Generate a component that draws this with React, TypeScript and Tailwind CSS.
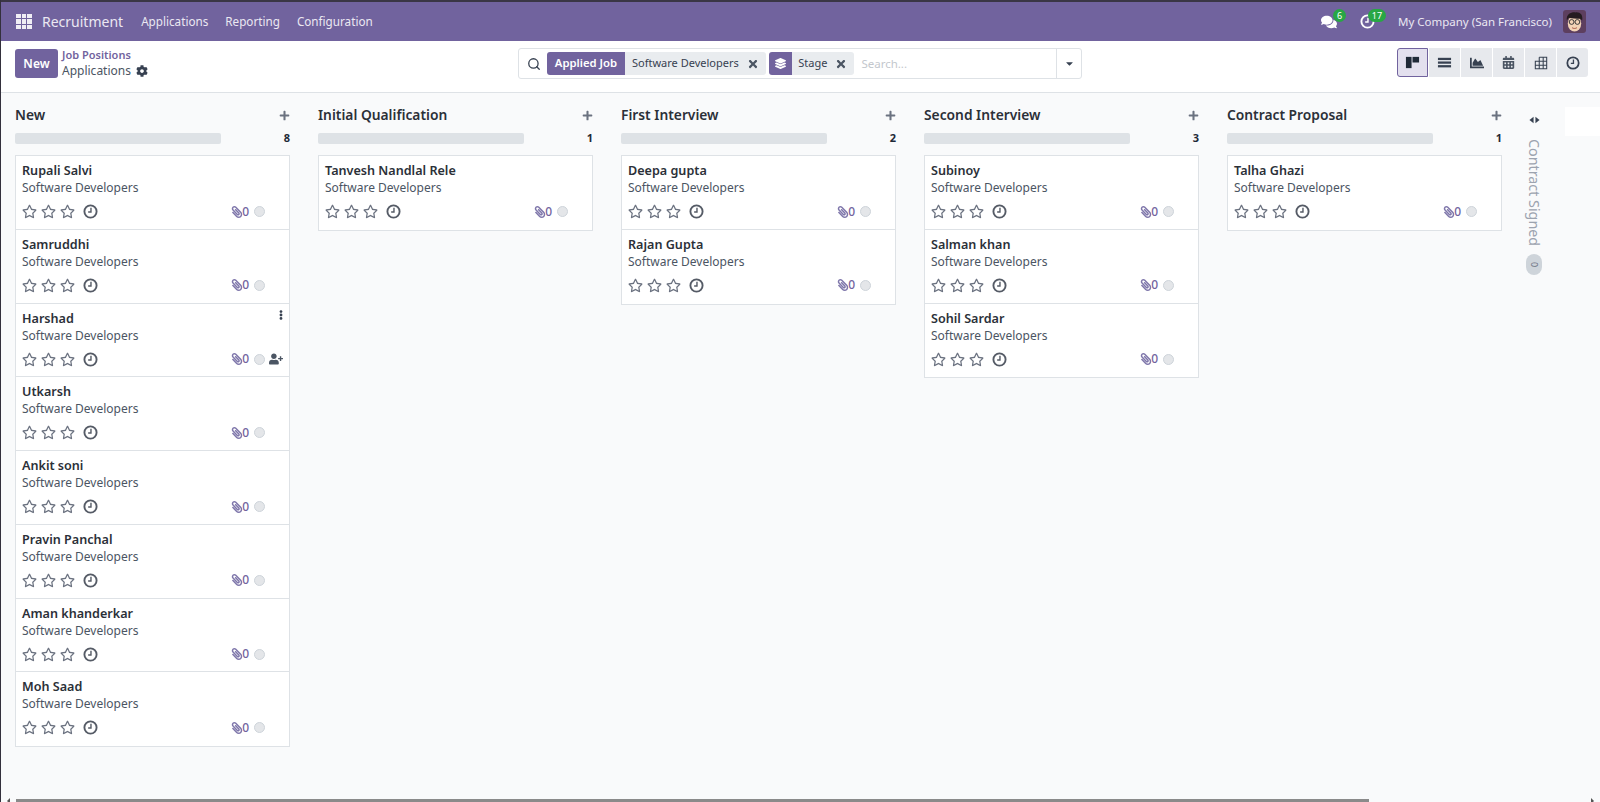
import { FaCalendarAlt, FaCaretDown, FaChartArea, FaCog, FaComments, FaEllipsisV, FaLayerGroup, FaPaperclip, FaPlus, FaRegStar, FaTimes, FaUserPlus } from 'react-icons/fa';
import { Search } from 'lucide-react';

const job = 'Software Developers';

const columns = [
  { title: 'New', names: ['Rupali Salvi', 'Samruddhi', 'Harshad', 'Utkarsh', 'Ankit soni', 'Pravin Panchal', 'Aman khanderkar', 'Moh Saad'] },
  { title: 'Initial Qualification', names: ['Tanvesh Nandlal Rele'] },
  { title: 'First Interview', names: ['Deepa gupta', 'Rajan Gupta'] },
  { title: 'Second Interview', names: ['Subinoy', 'Salman khan', 'Sohil Sardar'] },
  { title: 'Contract Proposal', names: ['Talha Ghazi'] },
];

function ClockIcon({ className }: { className: string }) {
  return (
    <svg viewBox="0 0 16 16" className={className} fill="none" stroke="currentColor">
      <circle cx="8" cy="8" r="6.500" strokeWidth="2" />
      <path d="M8.500 4v4.500H5.500" strokeWidth="1.500" />
    </svg>
  );
}

function Applicant({ name }: { name: string }) {
  const hovered = name === 'Harshad';
  return (
    <div className="relative h-[73.750px] border-b border-[#dee2e6] pl-[6px] pr-[4px] pt-[6px] last:border-b-0">
      <div className="h-[17px] text-[12.600px] font-semibold leading-[17px] text-[#2b3038]">{name}</div>
      <div className="h-[18px] text-[12px] leading-[18px] text-[#4b5563]">{job}</div>
      <div className="mt-[4.500px] flex h-[20px] items-center">
        <div className="flex gap-[4px] text-[#6b7280]">
          <FaRegStar className="size-[15px]" />
          <FaRegStar className="size-[15px]" />
          <FaRegStar className="size-[15px]" />
        </div>
        <ClockIcon className="ml-[8px] size-[15px] text-[#555b66]" />
        <FaPaperclip className="ml-auto size-[12px] -scale-x-100 text-[#7f77ab]" />
        <span className="-ml-[1px] mr-[1px] text-[12px] font-medium text-[#71639e]">0</span>
        <span className="ml-[4px] size-[11px] rounded-full border border-[#ced4da] bg-[#e4e6e9]" />
        <div className="ml-[4px] w-[16px]">
          {hovered ? <FaUserPlus className="size-[14px] text-[#4b5563]" /> : null}
        </div>
      </div>
      {hovered ? <FaEllipsisV className="absolute right-[3px] top-[6px] size-[10px] text-[#374151]" /> : null}
    </div>
  );
}

function Column({ title, names }: { title: string; names: string[] }) {
  return (
    <div className="w-[275px] shrink-0 pt-[10px]">
      <div className="flex h-[24px] items-center justify-between">
        <span className="text-[13.800px] font-semibold text-[#2b3038]">{title}</span>
        <FaPlus className="size-[11px] text-[#6b7280]" />
      </div>
      <div className="mt-[6px] flex h-[11px] items-center justify-between">
        <div className="h-[11px] w-[206px] rounded-[2px] bg-[#dee2e6]" />
        <span className="text-[11px] font-bold text-[#1f2937]">{names.length}</span>
      </div>
      <div className="mt-[11px] border border-[#dee2e6] bg-white">
        {names.map((name) => (
          <Applicant key={name} name={name} />
        ))}
      </div>
    </div>
  );
}

function KanbanIcon() {
  return (
    <svg viewBox="0 0 16 16" className="size-[15px]" fill="#1f2937">
      <rect x="1" y="2" width="6" height="12" />
      <rect x="8" y="2" width="7" height="6" />
    </svg>
  );
}

function ListIcon() {
  return (
    <svg viewBox="0 0 16 16" className="size-[15px]" fill="#374151">
      <rect x="1" y="3" width="14" height="2.400" />
      <rect x="1" y="6.900" width="14" height="2.400" />
      <rect x="1" y="10.800" width="14" height="2.400" />
    </svg>
  );
}

function PivotIcon() {
  return (
    <svg viewBox="0 0 16 16" className="size-[14px]" fill="none" stroke="#374151" strokeWidth="1.200">
      <path d="M6 1.500h8.500v13H1.500V6H14.500M6 1.500V14.500M10.500 1.500V14.500M1.500 10.500H14.500" />
    </svg>
  );
}

function FoldIcon() {
  return (
    <svg viewBox="0 0 12 8" className="h-[8px] w-[11px]" fill="#374151">
      <path d="M5 0.500V7.500L0.500 4Z" />
      <path d="M7 0.500V7.500L11.500 4Z" />
    </svg>
  );
}

function Avatar() {
  return (
    <svg viewBox="0 0 24 24" className="size-[23px] rounded-[3px]">
      <rect width="24" height="24" fill="#5d3f5f" />
      <ellipse cx="12" cy="14" rx="7" ry="8.500" fill="#f2d3b6" />
      <path d="M4 11C3 4 9 2 13 2.500C18 2 21 5 20 11L18 9C14 9 9 9 6 8Z" fill="#241c20" />
      <circle cx="9" cy="12.500" r="2.500" fill="none" stroke="#333" strokeWidth="1" />
      <circle cx="15" cy="12.500" r="2.500" fill="none" stroke="#333" strokeWidth="1" />
      <path d="M9.500 18.500C11 19.500 13 19.500 14.500 18.500" fill="none" stroke="#a5533f" strokeWidth="1" />
    </svg>
  );
}

function Apps() {
  return (
    <div className="grid w-[16px] grid-cols-3 gap-[1px]">
      {Array.from({ length: 9 }).map((_, i) => (
        <span key={i} className="h-[4.600px] bg-[#f0eef5]" />
      ))}
    </div>
  );
}

function Facet({ children }: { children: React.ReactNode }) {
  return <div className="flex h-[23px] items-center rounded-r-[3px] bg-[#e9ecef] text-[11px] text-[#374151]">{children}</div>;
}

export default function App() {
  return (
    <div className="flex h-[802px] w-[1600px] flex-col overflow-hidden border-l border-[#33303c] bg-[#f9fafb] font-['Noto_Sans',sans-serif]">
      <div className="h-[2px] shrink-0 bg-[#3a3645]" />
      <nav className="flex h-[39px] shrink-0 items-center bg-[#71639e] pl-[15px] text-[#ebe8f2]">
        <Apps />
        <span className="ml-[10px] text-[14px]">Recruitment</span>
        <span className="ml-[18px] text-[11.700px]">Applications</span>
        <span className="ml-[17px] text-[11.700px]">Reporting</span>
        <span className="ml-[17px] text-[11.700px]">Configuration</span>
        <div className="relative ml-auto mr-[23px] text-white">
          <FaComments className="size-[16px]" />
          <span className="absolute left-[12px] top-[-5px] flex size-[13px] items-center justify-center rounded-full bg-[#28a745] text-[9px] leading-none">6</span>
        </div>
        <div className="relative mr-[23px] text-white">
          <ClockIcon className="size-[15px]" />
          <span className="absolute left-[8px] top-[-5px] flex h-[13px] w-[18px] items-center justify-center rounded-full bg-[#28a745] text-[9px] leading-none">17</span>
        </div>
        <span className="text-[11.500px]">My Company (San Francisco)</span>
        <div className="ml-[11px] mr-[14px]">
          <Avatar />
        </div>
      </nav>
      <header className="flex h-[52px] shrink-0 items-start border-b border-[#dee2e6] bg-white pl-[14px] pt-[7px]">
        <div className="flex w-[503px] items-center">
          <button className="h-[29px] w-[43px] rounded-[3px] bg-[#71639e] text-[12px] font-semibold text-white">New</button>
          <div className="ml-[4px] flex flex-col">
            <span className="text-[11px] font-semibold leading-[14px] text-[#71639e]">Job Positions</span>
            <div className="flex items-center text-[12px] leading-[17px] text-[#4b5563]">
              Applications
              <FaCog className="ml-[5px] size-[12px] text-[#374151]" />
            </div>
          </div>
        </div>
        <div className="flex h-[31px] w-[564px] items-center rounded-[3px] border border-[#dee2e6] pl-[8px]">
          <Search className="size-[14px] text-[#374151]" strokeWidth={2.200} />
          <div className="ml-[6px] flex h-[23px] w-[78px] items-center justify-center rounded-l-[3px] bg-[#71639e] text-[11.300px] font-semibold text-white">Applied Job</div>
          <Facet>
            <span className="pl-[7px]">{job}</span>
            <FaTimes className="ml-[8px] mr-[7px] size-[12px] text-[#4b5563]" />
          </Facet>
          <div className="ml-[3.500px] flex h-[23px] w-[23px] items-center justify-center rounded-l-[3px] bg-[#71639e]">
            <FaLayerGroup className="size-[11px] text-white" />
          </div>
          <Facet>
            <span className="pl-[6px]">Stage</span>
            <FaTimes className="ml-[8px] mr-[7px] size-[12px] text-[#4b5563]" />
          </Facet>
          <span className="ml-[7px] text-[11.500px] text-[#c3c7cd]">Search...</span>
          <div className="ml-auto flex h-full w-[25px] items-center justify-center border-l border-[#dee2e6]">
            <FaCaretDown className="size-[11px] text-[#374151]" />
          </div>
        </div>
        <div className="ml-[315px] flex gap-[1px]">
          <div className="flex h-[29px] w-[31px] items-center justify-center rounded-l-[3px] border border-[#71639e] bg-[#e3e0ee]">
            <KanbanIcon />
          </div>
          <div className="flex h-[29px] w-[31px] items-center justify-center bg-[#e7e9ed]">
            <ListIcon />
          </div>
          <div className="flex h-[29px] w-[31px] items-center justify-center bg-[#e7e9ed]">
            <FaChartArea className="size-[14px] text-[#374151]" />
          </div>
          <div className="flex h-[29px] w-[31px] items-center justify-center bg-[#e7e9ed]">
            <FaCalendarAlt className="size-[13px] text-[#4b5563]" />
          </div>
          <div className="flex h-[29px] w-[31px] items-center justify-center bg-[#e7e9ed]">
            <PivotIcon />
          </div>
          <div className="flex h-[29px] w-[31px] items-center justify-center rounded-r-[3px] bg-[#e7e9ed]">
            <ClockIcon className="size-[14px] text-[#374151]" />
          </div>
        </div>
      </header>
      <main className="relative flex min-h-0 flex-1 gap-[28px] pl-[14px]">
        {columns.map((column) => (
          <Column key={column.title} title={column.title} names={column.names} />
        ))}
        <div className="-ml-[6px] flex w-[20px] shrink-0 flex-col items-center pt-[23px] text-[#6b7280]">
          <FoldIcon />
          <span className="mt-[15px] text-[14.300px] leading-[18px] text-[#9ca3af] [writing-mode:vertical-rl]">Contract Signed</span>
          <span className="mt-[8px] flex h-[21px] w-[16px] items-center justify-center rounded-full bg-[#ced4da] text-[9px] [writing-mode:vertical-rl]">0</span>
        </div>
        <div className="absolute right-0 top-[14px] h-[29px] w-[35px] bg-white" />
      </main>
      <div className="flex h-[3px] shrink-0 items-center">
        <div className="ml-[6px] h-0 w-0 border-y-[3px] border-r-[3px] border-y-transparent border-r-[#555]" />
        <div className="ml-[6px] h-full w-[1353px] bg-[#8a8a8a]" />
        <div className="ml-auto mr-[6px] h-0 w-0 border-y-[3px] border-l-[3px] border-y-transparent border-l-[#555]" />
      </div>
    </div>
  );
}
